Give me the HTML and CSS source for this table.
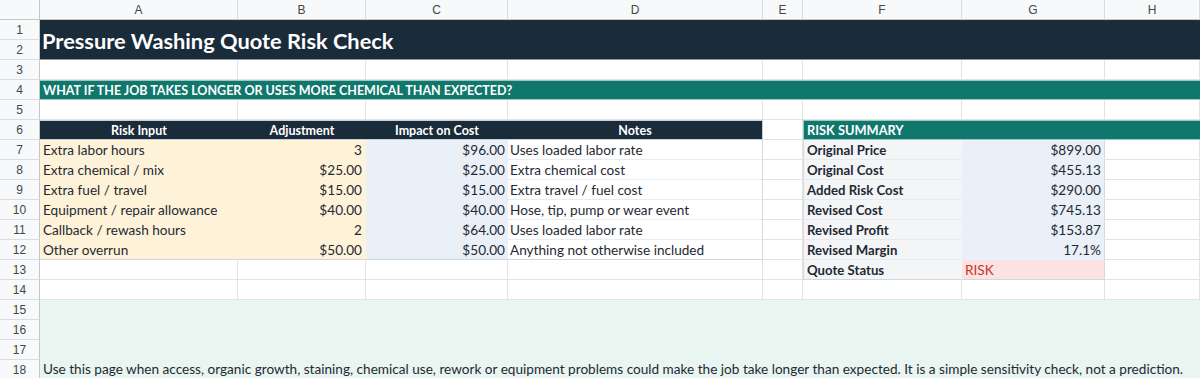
FILE: index.html
```html
<!DOCTYPE html>
<html>
<head>
<meta charset="utf-8">
<link rel="stylesheet" href="styles.css">
</head>
<body>
<div class="sheet">
  <div class="corner"></div>
  <div class="ch">A</div><div class="ch">B</div><div class="ch">C</div><div class="ch">D</div><div class="ch">E</div><div class="ch">F</div><div class="ch">G</div><div class="ch">H</div>

  <div class="rh">1</div>
  <div class="title">Pressure Washing Quote Risk Check</div>
  <div class="rh">2</div>

  <div class="rh">3</div>
  <div class="c"></div><div class="c"></div><div class="c"></div><div class="c"></div><div class="c"></div><div class="c"></div><div class="c"></div><div class="c"></div>

  <div class="rh">4</div>
  <div class="band">WHAT IF THE JOB TAKES LONGER OR USES MORE CHEMICAL THAN EXPECTED?</div>

  <div class="rh">5</div>
  <div class="c"></div><div class="c"></div><div class="c"></div><div class="c"></div><div class="c"></div><div class="c"></div><div class="c"></div><div class="c"></div>

  <div class="rh">6</div>
  <div class="th">Risk Input</div><div class="th">Adjustment</div><div class="th">Impact on Cost</div><div class="th th-last">Notes</div>
  <div class="c"></div>
  <div class="sumhead">RISK SUMMARY</div>

  <div class="rh">7</div>
  <div class="c inp">Extra labor hours</div><div class="c inp num">3</div><div class="c calc num">$96.00</div><div class="c note">Uses loaded labor rate</div>
  <div class="c"></div><div class="c lab">Original Price</div><div class="c val num">$899.00</div><div class="c"></div>

  <div class="rh">8</div>
  <div class="c inp">Extra chemical / mix</div><div class="c inp num">$25.00</div><div class="c calc num">$25.00</div><div class="c note">Extra chemical cost</div>
  <div class="c"></div><div class="c lab">Original Cost</div><div class="c val num">$455.13</div><div class="c"></div>

  <div class="rh">9</div>
  <div class="c inp">Extra fuel / travel</div><div class="c inp num">$15.00</div><div class="c calc num">$15.00</div><div class="c note">Extra travel / fuel cost</div>
  <div class="c"></div><div class="c lab">Added Risk Cost</div><div class="c val num">$290.00</div><div class="c"></div>

  <div class="rh">10</div>
  <div class="c inp">Equipment / repair allowance</div><div class="c inp num">$40.00</div><div class="c calc num">$40.00</div><div class="c note">Hose, tip, pump or wear event</div>
  <div class="c"></div><div class="c lab">Revised Cost</div><div class="c val num">$745.13</div><div class="c"></div>

  <div class="rh">11</div>
  <div class="c inp">Callback / rewash hours</div><div class="c inp num">2</div><div class="c calc num">$64.00</div><div class="c note">Uses loaded labor rate</div>
  <div class="c"></div><div class="c lab">Revised Profit</div><div class="c val num">$153.87</div><div class="c"></div>

  <div class="rh">12</div>
  <div class="c inp last">Other overrun</div><div class="c inp num last">$50.00</div><div class="c calc num last">$50.00</div><div class="c note last">Anything not otherwise included</div>
  <div class="c"></div><div class="c lab">Revised Margin</div><div class="c val num">17.1%</div><div class="c"></div>

  <div class="rh">13</div>
  <div class="c"></div><div class="c"></div><div class="c"></div><div class="c"></div>
  <div class="c"></div><div class="c lab last">Quote Status</div><div class="c status last">RISK</div><div class="c"></div>

  <div class="rh">14</div>
  <div class="c"></div><div class="c"></div><div class="c"></div><div class="c"></div><div class="c"></div><div class="c"></div><div class="c"></div><div class="c"></div>

  <div class="rh">15</div>
  <div class="footnote">Use this page when access, organic growth, staining, chemical use, rework or equipment problems could make the job take longer than expected. It is a simple sensitivity check, not a prediction.</div>
  <div class="rh">16</div>
  <div class="rh">17</div>
  <div class="rh">18</div>
</div>
</body>
</html>
```

FILE: styles.css
```css
html, body {
  margin: 0;
  padding: 0;
  background: #ffffff;
  overflow: hidden;
}

.sheet {
  display: grid;
  grid-template-columns: 40px 198px 128px 142px 255px 40px 159px 143px 95px;
  grid-auto-rows: 20px;
  width: 1200px;
  font-family: Lato, "Noto Sans", sans-serif;
  font-size: 13.6px;
  color: #1f2933;
}

.sheet > div {
  box-sizing: border-box;
  min-width: 0;
  white-space: nowrap;
  overflow: hidden;
}

.corner {
  background: #f8f9fa;
  border-right: 1px solid #c4c7c5;
  border-bottom: 1px solid #c4c7c5;
}

.ch {
  background: #f8f9fa;
  border-right: 1px solid #dadce0;
  border-bottom: 1px solid #c4c7c5;
  font-family: "Liberation Sans", Arial, sans-serif;
  font-size: 12px;
  color: #444746;
  display: flex;
  align-items: center;
  justify-content: center;
}

.rh {
  grid-column: 1;
  background: #f8f9fa;
  border-right: 1px solid #c4c7c5;
  border-bottom: 1px solid #dadce0;
  font-family: "Liberation Sans", Arial, sans-serif;
  font-size: 12px;
  color: #444746;
  display: flex;
  align-items: center;
  justify-content: center;
}

.c {
  border-right: 1px solid #e3e3e3;
  border-bottom: 1px solid #e3e3e3;
  padding: 0 3px;
  display: flex;
  align-items: center;
}

.num {
  justify-content: flex-end;
}

.title {
  grid-column: 2 / span 8;
  grid-row: span 2;
  background: #1a2b3a;
  color: #ffffff;
  font-weight: 700;
  font-size: 21.8px;
  padding: 2px 2px 0;
  display: flex;
  align-items: center;
  border-bottom: 1px solid #8a96a0;
}

.band {
  grid-column: 2 / span 8;
  background: #10776d;
  color: #ffffff;
  font-weight: 700;
  font-size: 12.5px;
  padding: 0 3px;
  display: flex;
  align-items: center;
  border-top: 1px solid #9fc7c2;
  border-bottom: 1px solid #9fc7c2;
}

.th {
  background: #1a2b3a;
  color: #ffffff;
  font-weight: 700;
  font-size: 12.5px;
  display: flex;
  align-items: center;
  justify-content: center;
  border-top: 1px solid #c7d0d8;
  border-bottom: 1px solid #c7d0d8;
}

.th-last {
  border-right: 1px solid #c7d0d8;
}

.sumhead {
  grid-column: 7 / span 3;
  background: #10776d;
  color: #ffffff;
  font-weight: 700;
  font-size: 12.8px;
  padding: 0 3px;
  display: flex;
  align-items: center;
  border-top: 1px solid #9fc7c2;
  border-bottom: 1px solid #9fc7c2;
  border-left: 1px solid #9fc7c2;
}

.inp {
  background: #fef3d9;
  border-right-color: #fef3d9;
  border-bottom-color: #fef3d9;
}

.calc {
  background: #e9f0f8;
  border-right-color: #e9f0f8;
  border-bottom-color: #e9f0f8;
  padding-right: 2px;
}

.note {
  background: #ffffff;
  border-right: 1px solid #d3dae2;
  border-bottom: 1px solid #e8ebef;
  padding-left: 2px;
}

.last {
  border-bottom: 1px solid #cfd6de;
}

.lab {
  background: #f4f5f7;
  font-weight: 700;
  font-size: 13.2px;
  border-left: 1px solid #d3dae2;
  border-right-color: #f4f5f7;
  border-bottom-color: #e6e9ed;
}

.val {
  background: #e9f0f8;
  border-right: 1px solid #d3dae2;
  border-bottom-color: #e9f0f8;
}

.status {
  background: #fde2e2;
  color: #c0392b;
  border-right: 1px solid #d3dae2;
}

.lab.last, .status.last {
  border-bottom: 1px solid #cfd6de;
}

.footnote {
  grid-column: 2 / span 8;
  grid-row: span 4;
  background: #e8f5f1;
  display: flex;
  align-items: flex-end;
  padding: 0 3px 1px;
  font-size: 13.6px;
  line-height: 20px;
}
```
